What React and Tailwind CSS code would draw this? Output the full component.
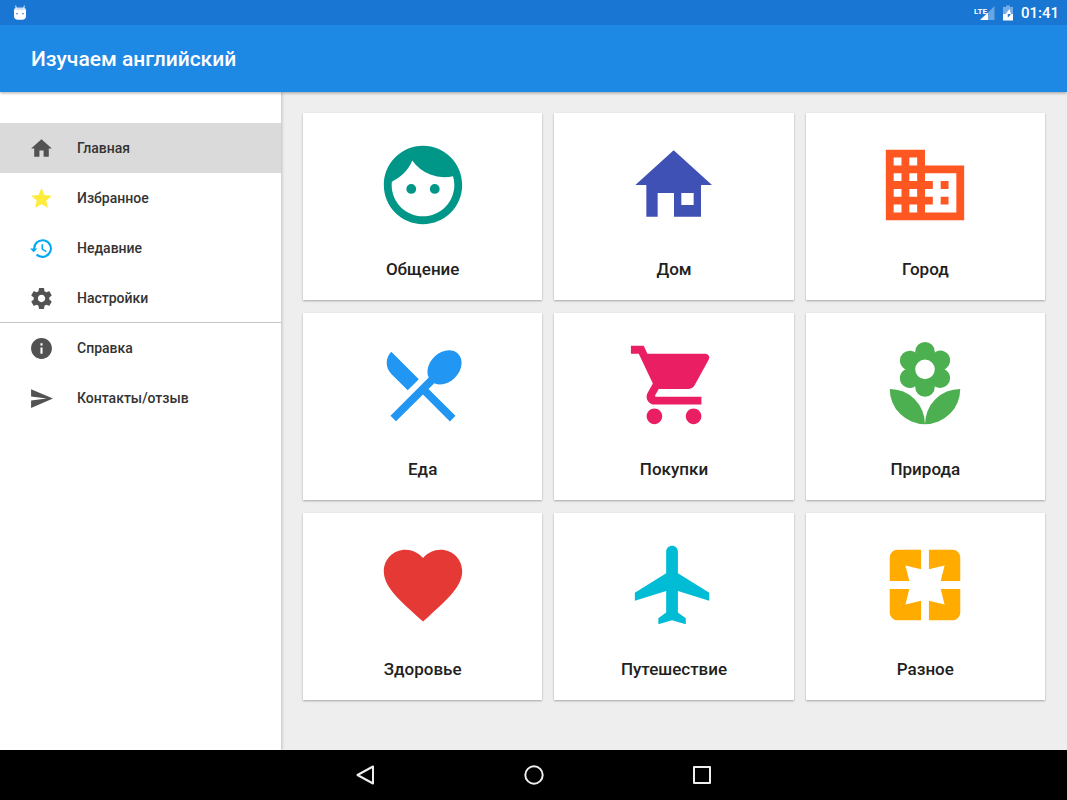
import { useState } from 'react';
import {
  MdDomain,
  MdFace,
  MdFavorite,
  MdHome,
  MdInfo,
  MdLocalDining,
  MdLocalFlorist,
  MdPages,
  MdSend,
  MdShoppingCart,
  MdStar,
} from 'react-icons/md';

const HistoryIcon = ({ className }) => (
  <svg viewBox="0 0 24 24" fill="currentColor" className={className} aria-hidden="true">
    <path d="M13 3a9 9 0 0 0-9 9H1l3.5 3.6L8 12H6a7 7 0 1 1 2.06 4.94l-1.42 1.42A9 9 0 1 0 13 3zm-1 5v5l4.28 2.54.72-1.21-3.5-2.08V8H12z" />
  </svg>
);

const SettingsIcon = ({ className }) => (
  <svg viewBox="0 0 24 24" fill="currentColor" className={className} aria-hidden="true">
    <path d="M19.43 12.98c.04-.32.07-.64.07-.98s-.03-.66-.07-.98l2.11-1.65c.19-.15.24-.42.12-.64l-2-3.46c-.12-.22-.39-.3-.61-.22l-2.49 1c-.52-.4-1.08-.73-1.69-.98l-.38-2.65C14.46 2.18 14.25 2 14 2h-4c-.25 0-.46.18-.49.42l-.38 2.65c-.61.25-1.17.59-1.69.98l-2.49-1c-.23-.09-.49 0-.61.22l-2 3.46c-.13.22-.07.49.12.64l2.11 1.65c-.04.32-.07.65-.07.98s.03.66.07.98l-2.11 1.65c-.19.15-.24.42-.12.64l2 3.46c.12.22.39.3.61.22l2.49-1c.52.4 1.08.73 1.69.98l.38 2.65c.03.24.24.42.49.42h4c.25 0 .46-.18.49-.42l.38-2.65c.61-.25 1.17-.59 1.69-.98l2.49 1c.23.09.49 0 .61-.22l2-3.46c.12-.22.07-.49-.12-.64l-2.11-1.65zM12 15.5c-1.93 0-3.5-1.57-3.5-3.5s1.57-3.5 3.5-3.5 3.5 1.57 3.5 3.5-1.57 3.5-3.5 3.5z" />
  </svg>
);

const HouseIcon = ({ className }) => (
  <svg viewBox="246 114 282 282" fill="currentColor" fillRule="evenodd" className={className} aria-hidden="true">
    <path d="M386 151 501 255H468V350H387V279H338V350H304V255H271ZM409 279V315H446V279Z" />
  </svg>
);

const PlaneIcon = ({ className }) => (
  <svg viewBox="0 0 24 24" fill="currentColor" className={className} aria-hidden="true">
    <path d="M21 16v-2l-8-5V3.5c0-.83-.67-1.5-1.5-1.5S10 2.67 10 3.5V9l-8 5v2l8-2.5V19l-2 1.5V22l3.5-1 3.5 1v-1.5L13 19v-5.5l8 2.5z" />
  </svg>
);

const mainMenu = [
  { name: 'Главная', icon: MdHome, color: 'text-[#525252]' },
  { name: 'Избранное', icon: MdStar, color: 'text-[#ffeb3b]' },
  { name: 'Недавние', icon: HistoryIcon, color: 'text-[#03a9f4]' },
  { name: 'Настройки', icon: SettingsIcon, color: 'text-[#525252]' },
];

const extraMenu = [
  { name: 'Справка', icon: MdInfo, color: 'text-[#525252]' },
  { name: 'Контакты/отзыв', icon: MdSend, color: 'text-[#525252]' },
];

const topics = [
  { name: 'Общение', icon: MdFace, color: 'text-[#009688]' },
  { name: 'Дом', icon: HouseIcon, color: 'text-[#3f51b5]' },
  { name: 'Город', icon: MdDomain, color: 'text-[#ff5722]' },
  { name: 'Еда', icon: MdLocalDining, color: 'text-[#2196f3]' },
  { name: 'Покупки', icon: MdShoppingCart, color: 'text-[#e91e63]' },
  { name: 'Природа', icon: MdLocalFlorist, color: 'text-[#4caf50]' },
  { name: 'Здоровье', icon: MdFavorite, color: 'text-[#e53935]' },
  { name: 'Путешествие', icon: PlaneIcon, color: 'text-[#00bcd4]' },
  { name: 'Разное', icon: MdPages, color: 'text-[#ffab00]' },
];

const StatusBar = () => (
  <div className="relative z-20 flex h-[25px] items-center justify-between bg-[#1976d2] pl-3 pr-2 text-white">
    {/* Android head */}
    <svg viewBox="0 0 16 16" className="h-4 w-4" aria-hidden="true">
      <path d="M3.5.5 4.6 4M12.5.5 11.4 4" stroke="#fff" strokeOpacity=".7" strokeWidth="1.2" />
      <path d="M2 5q0-2.5 3-2.5h6q3 0 3 2.5z" fill="#fff" fillOpacity=".75" />
      <path d="M2 4.7h12V11q0 3.8-4 3.8H6q-4 0-4-3.8z" fill="#fff" />
      <circle cx="5" cy="8.7" r=".8" fill="#1976d2" />
      <circle cx="11" cy="8.7" r=".8" fill="#1976d2" />
    </svg>
    <div className="flex items-center">
      <span className="self-start pt-1 font-['Liberation_Sans_Narrow','Roboto',sans-serif] text-[8px] leading-[9px] font-bold">
        LTE
      </span>
      <svg viewBox="0 0 16 16" className="-ml-2 h-4 w-4" aria-hidden="true">
        <path d="M15.5 1v14H9V7.5z" fill="#fff" fillOpacity=".35" />
        <path d="M1 15 9 7.5V15z" fill="#fff" />
      </svg>
      <svg viewBox="0 0 10 16" className="ml-2 h-4 w-[10px]" aria-hidden="true">
        <path d="M0 2h3V.5h4V2h3v7H0z" fill="#fff" fillOpacity=".4" />
        <path d="M0 9h10v6.5H0z" fill="#fff" />
        <path d="M6.5 4 2 9.8h2.5V9H8z" fill="#fff" />
        <path d="M2.2 9.3h2.6v3.5L8 9z" fill="#1976d2" />
      </svg>
      <span className="ml-2 text-[15px] leading-5 font-medium">01:41</span>
    </div>
  </div>
);

const MenuItem = ({ item, active, onSelect }) => {
  const Icon = item.icon;
  return (
    <li>
      <button
        type="button"
        onClick={() => onSelect(item.name)}
        className={`flex h-[50px] w-full items-center gap-[23px] pl-[29px] text-left text-[14px] leading-5 font-medium text-[#333333] ${
          active ? 'bg-[#dadada]' : 'bg-white'
        }`}
      >
        <Icon className={`h-[25px] w-[25px] shrink-0 ${item.color}`} />
        {item.name}
      </button>
    </li>
  );
};

const Sidebar = () => {
  const [current, setCurrent] = useState('Главная');

  return (
    <nav className="w-[281px] shrink-0 bg-white pt-[31px] shadow-[1px_0_3px_rgba(0,0,0,0.2)]">
      <ul>
        {mainMenu.map((item) => (
          <MenuItem key={item.name} item={item} active={current === item.name} onSelect={setCurrent} />
        ))}
      </ul>
      <ul className="shadow-[0_-1px_0_#c4c4c4]">
        {extraMenu.map((item) => (
          <MenuItem key={item.name} item={item} active={current === item.name} onSelect={setCurrent} />
        ))}
      </ul>
    </nav>
  );
};

const TopicCard = ({ topic }) => {
  const Icon = topic.icon;
  return (
    <button
      type="button"
      className="flex h-[187px] flex-col items-center bg-white pt-[25px] shadow-[0_1px_2px_rgba(0,0,0,0.3)]"
    >
      <Icon className={`h-[94px] w-[94px] ${topic.color}`} />
      <span className="mt-[25px] text-[17px] leading-6 font-medium text-[#212121]">{topic.name}</span>
    </button>
  );
};

const NavigationBar = () => (
  <div className="flex h-[50px] items-center justify-center gap-36 bg-black text-[#eeeeee]">
    <button type="button" aria-label="Назад">
      <svg viewBox="0 0 24 24" fill="none" stroke="currentColor" strokeWidth="2" strokeLinejoin="round" className="h-6 w-6">
        <path d="M19 3.5v17L3.5 12z" />
      </svg>
    </button>
    <button type="button" aria-label="Домой">
      <svg viewBox="0 0 24 24" fill="none" stroke="currentColor" strokeWidth="2" className="h-6 w-6">
        <circle cx="12" cy="12" r="8.7" />
      </svg>
    </button>
    <button type="button" aria-label="Недавние приложения">
      <svg viewBox="0 0 24 24" fill="none" stroke="currentColor" strokeWidth="2" strokeLinejoin="round" className="h-6 w-6">
        <path d="M4 4h16v16H4z" />
      </svg>
    </button>
  </div>
);

const App = () => {
  return (
    <div className="flex min-h-screen flex-col bg-[#eeeeee] font-['Roboto',sans-serif]">
      <StatusBar />
      <header className="z-10 flex h-[67px] items-center bg-[#1e88e5] px-[31px] pt-px shadow-[0_1px_3px_rgba(0,0,0,0.35)]">
        <h1 className="text-[21px] leading-7 font-medium text-white">Изучаем английский</h1>
      </header>
      <div className="flex flex-1">
        <Sidebar />
        <main className="grid flex-1 grid-cols-3 content-start gap-x-3 gap-y-[13px] px-[22px] pt-[21px] pb-12">
          {topics.map((topic) => (
            <TopicCard key={topic.name} topic={topic} />
          ))}
        </main>
      </div>
      <NavigationBar />
    </div>
  );
};

export default App;
